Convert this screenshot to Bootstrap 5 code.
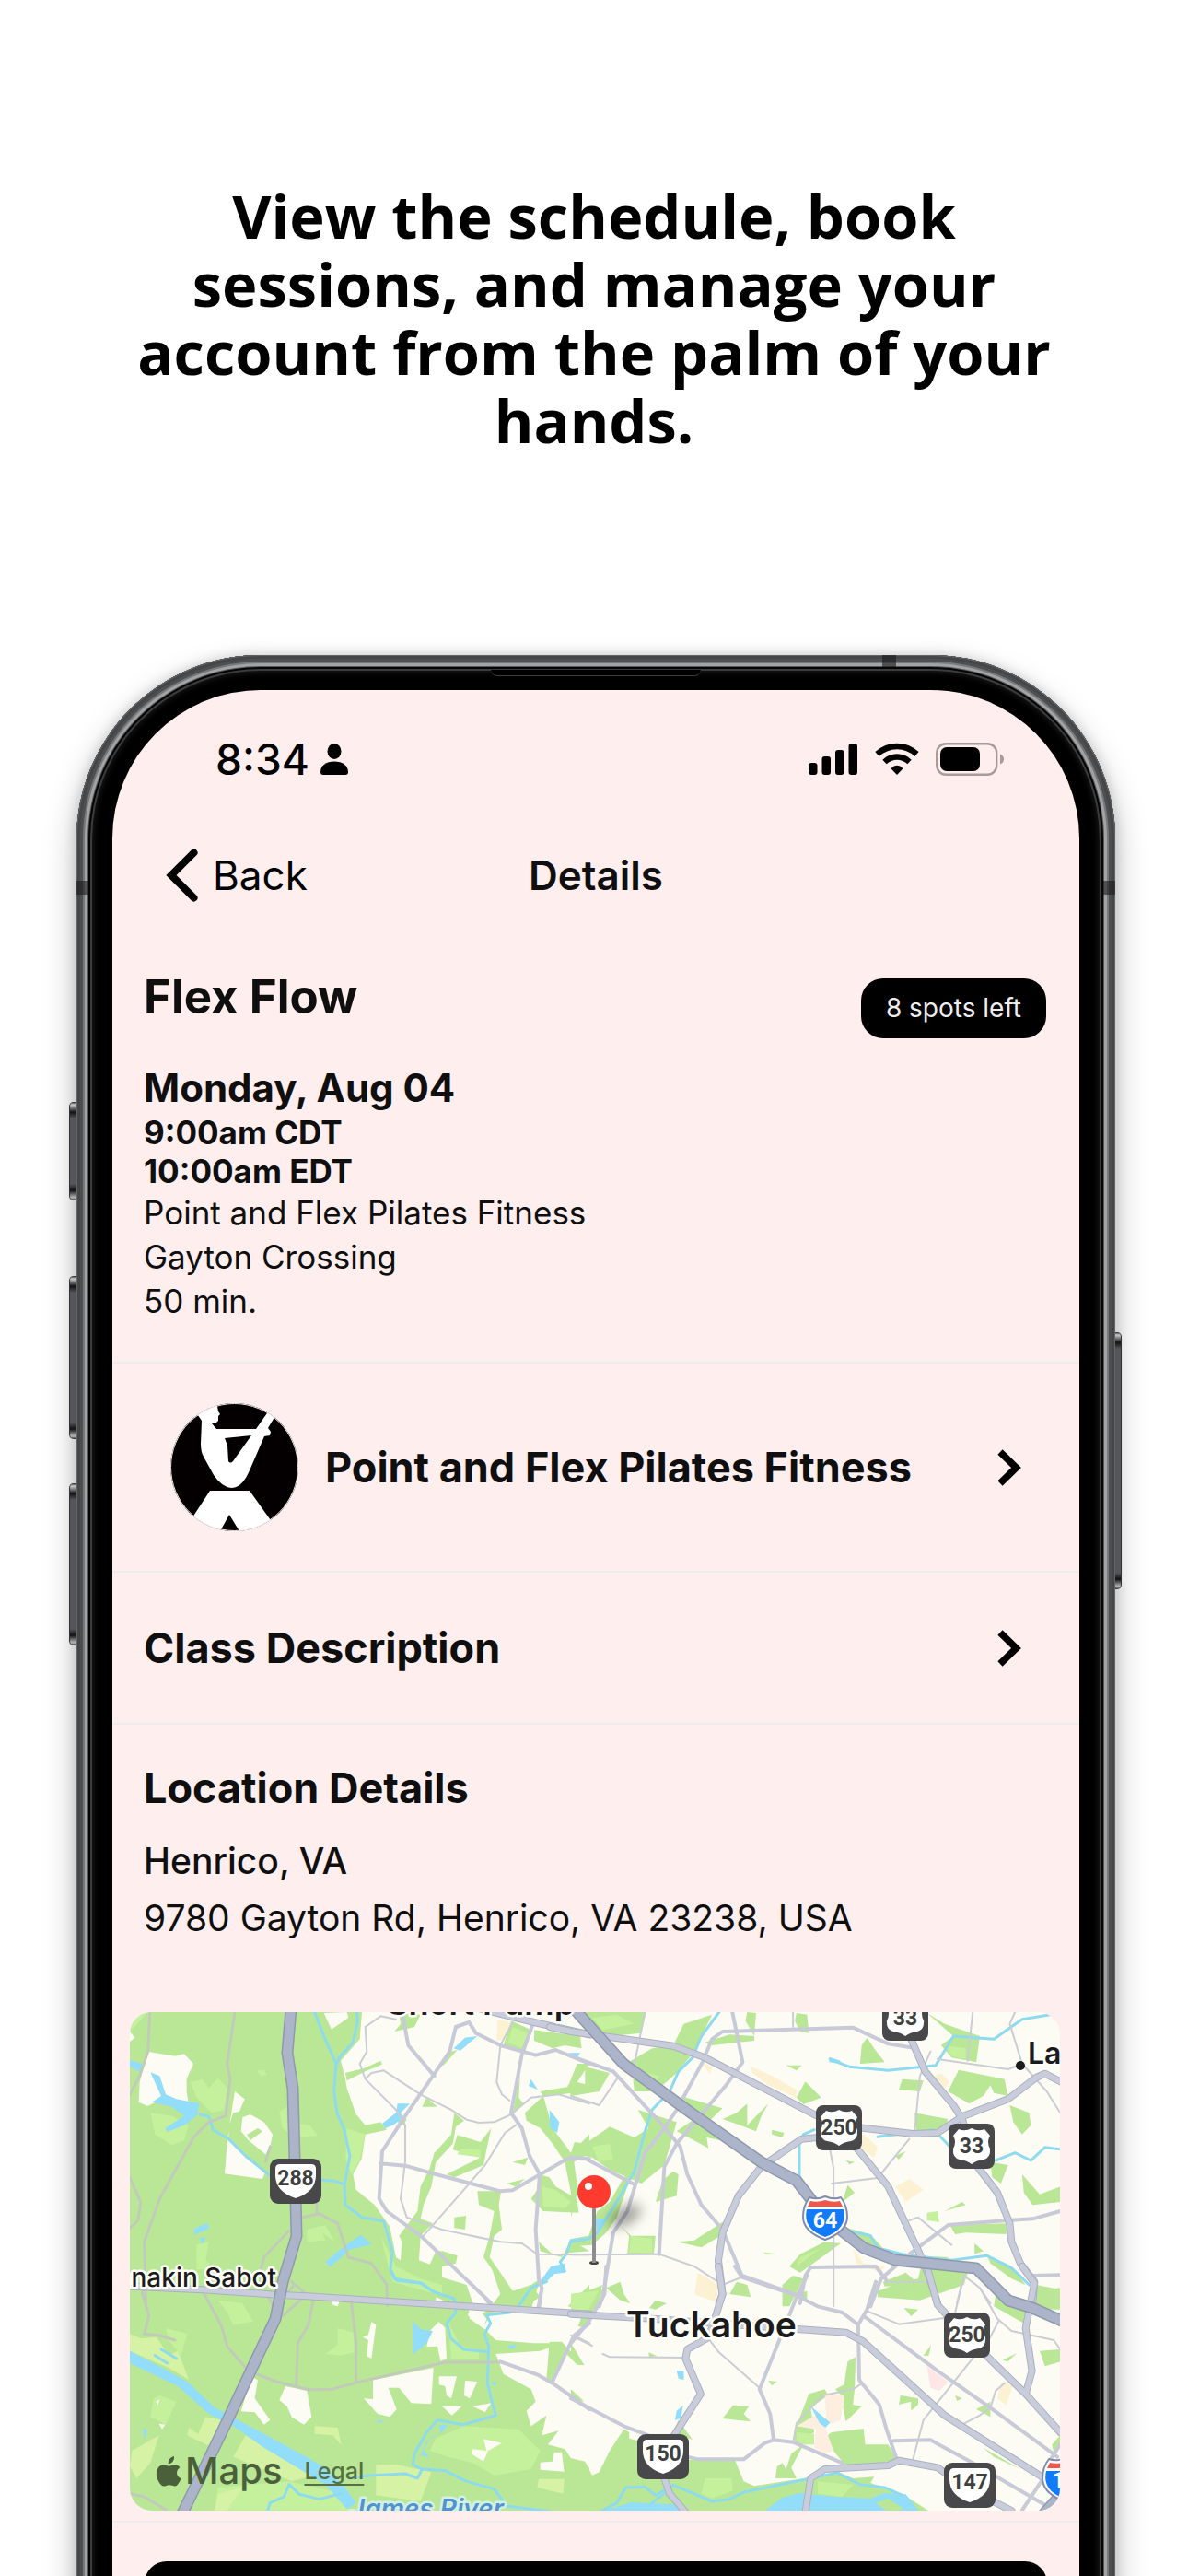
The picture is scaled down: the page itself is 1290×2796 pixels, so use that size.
<!DOCTYPE html>
<html lang="en">
<head>
<meta charset="utf-8">
<meta name="viewport" content="width=device-width, initial-scale=1">
<title>Class details</title>
<link href="https://cdn.jsdelivr.net/npm/bootstrap@5.3.0/dist/css/bootstrap.min.css" rel="stylesheet">
<style>
  body { background: #fff; color: #0f0f0f; font-family: Inter, "Liberation Sans", sans-serif; }
  .headline { font: 700 65px/74px "Open Sans", "Noto Sans", sans-serif; color: #000; padding: 197px 140px 218px; }
  .device-wrap { padding: 0 79px 0 83px; }
  .device {
    padding: 38px 39px 0; margin-bottom: -80px; border-radius: 200px 200px 0 0; background: #000;
    box-shadow: 0 16px 36px rgba(0,0,0,.26), 0 0 14px rgba(0,0,0,.16);
  }
  .device-rim {
    inset: 0; border-radius: inherit; pointer-events: none;
    box-shadow: inset 0 0 0 1px #636466, inset 0 0 0 4px #454648, inset 0 0 0 7px #4e4f51, inset 0 0 0 9px #77787a,
      inset 0 0 0 12px #a2a3a4, inset 0 0 0 13px #555658, inset 0 0 0 15px #050505, inset 0 0 0 17px #3c3c3d, inset 0 0 7px 18px #1d1d1e;
  }
  .speaker { top: 16px; left: 50%; width: 228px; height: 7px; margin-left: -114px; background: #000; border-bottom: 1px solid #3c3c3d; border-radius: 0 0 8px 8px; }
  .antenna { background: rgba(25,25,27,.6); }
  .antenna-top { top: 0; right: 238px; width: 15px; height: 13px; }
  .antenna-left { left: 0; top: 245px; width: 13px; height: 15px; }
  .antenna-right { right: 0; top: 245px; width: 13px; height: 15px; }
  .side-key { width: 9px; background: linear-gradient(#222, #ccc 3px, #111 11px, #55565a 18px, #55565a calc(100% - 18px), #111 calc(100% - 11px), #bbb calc(100% - 3px), #222); border-left: 1px solid #333; border-radius: 5px 0 0 5px; left: -8px; }
  .key-action { top: 485px; height: 107px; }
  .key-up { top: 674px; height: 177px; }
  .key-down { top: 899px; height: 176px; }
  .key-power { left: auto; right: -7px; top: 735px; height: 279px; border-radius: 0 5px 5px 0; border-left: 0; border-right: 1px solid #333; }
  .display-area { background: #ffeeee; border-radius: 161px 161px 0 0; }

  .status { padding: 50px 82px 0 112px; height: 100px; font-size: 46px; line-height: 50px; font-weight: 500; color: #000; }
  .topbar { padding: 0 58px; margin-top: 72px; height: 56px; font-size: 44px; line-height: 56px; }
  .back-btn { border: 0; background: none; color: #000; gap: 16px; }
  .title-lg { font-size: 51px; line-height: 60px; font-weight: 700; }
  .title-md { font-size: 45px; line-height: 56px; font-weight: 700; }
  .block { padding: 0 36px 0 34px; border-bottom: 2px solid #efecef; }
  .summary { padding-top: 75px; padding-bottom: 42px; }
  .spots { background: #000; color: #eee; font-size: 28px; line-height: 65px; padding: 0 27px; border-radius: 24px; margin-top: 10px; font-weight: 400; }
  .day { font-size: 42px; line-height: 50px; font-weight: 700; margin: 29px 0 2px; }
  .hour { font-size: 35px; line-height: 42px; font-weight: 700; }
  .info { font-size: 35px; line-height: 48px; }
  .link-row { color: inherit; text-decoration: none; padding-right: 62px; }
  .studio { padding-left: 63px; padding-top: 43px; padding-bottom: 43px; gap: 29px; }
  .desc { height: 165px; }
  .place { padding: 41px 34px 71px; }
  .address { font-size: 39px; line-height: 62px; }
  .map-block { padding: 0 21px 11px 19px; }
  .map-box { border-radius: 24px; }
  .map-credit { left: 28px; bottom: 19px; gap: 24px; color: #49603b; }
  .map-credit span { font-size: 40px; line-height: 48px; font-weight: 500; }
  .map-credit a { font-size: 25px; line-height: 28px; font-weight: 500; color: #567044; text-underline-offset: 5px; }
  .action { margin: 42px 35px 0; height: 150px; border-radius: 24px; background: #000; border: 0; }

  .map-svg path, .map-svg line { vector-effect: non-scaling-stroke; stroke-linejoin: round; stroke-linecap: round; }
  .wood { fill: #b9e796; }
  .field { fill: #c5f09c; }
  .crop-land { fill: #d6f2a4; }
  .town { fill: #fcfbf4; }
  .shop { fill: #fdf1d3; }
  .pond { fill: #92ddfa; }
  .stream { fill: none; stroke: #8fdbee; stroke-width: 3; }
  .lane { fill: none; stroke: #cbcdd5; stroke-width: 2; }
  .rural { fill: none; stroke: #c2cbb9; stroke-width: 3; }
  .street { fill: none; stroke: #c8cbd7; stroke-width: 4; }
  .main-edge { fill: none; stroke: #abb0c0; stroke-width: 8; }
  .main-fill { fill: none; stroke: #c9cddb; stroke-width: 6; }
  .fwy-edge { fill: none; stroke: #8f98ad; stroke-width: 13; }
  .fwy-fill { fill: none; stroke: #acb4c9; stroke-width: 10; }
  .map-name { font-family: Inter, sans-serif; font-weight: 600; fill: #1b1b1d; stroke: #fffef8; stroke-width: 5; paint-order: stroke; stroke-linejoin: round; }
  .shield-no { font-family: "Liberation Sans Narrow", Roboto, sans-serif; font-weight: 700; font-size: 23px; fill: #3f3f40; text-anchor: middle; }
</style>
<script src="https://cdn.jsdelivr.net/npm/bootstrap@5.3.0/dist/js/bootstrap.bundle.min.js"></script>
</head>
<body>
<main class="vh-100 overflow-hidden d-flex flex-column">
  <h1 class="headline text-center mb-0">View the schedule, book sessions, and manage your account from the palm of your hands.</h1>

  <div class="device-wrap flex-grow-1 d-flex flex-column">
    <div class="device position-relative flex-grow-1">
      <i class="side-key key-action position-absolute"></i>
      <i class="side-key key-up position-absolute"></i>
      <i class="side-key key-down position-absolute"></i>
      <i class="side-key key-power position-absolute"></i>
      <div class="device-rim position-absolute"></div>
      <i class="speaker position-absolute"></i>
      <i class="antenna antenna-top position-absolute"></i>
      <i class="antenna antenna-left position-absolute"></i>
      <i class="antenna antenna-right position-absolute"></i>

      <div class="display-area position-relative overflow-hidden h-100">
        <div class="status d-flex align-items-center justify-content-between">
          <div class="d-flex align-items-center gap-2">
            <span>8:34</span>
            <svg width="36" height="34" viewBox="0 0 36 34"><ellipse cx="19" cy="8.500" rx="7.500" ry="8.500"/><path d="M4 31C4 24 10 19.500 19 19.500S34 24 34 31Q34 34 31 34H7Q4 34 4 31Z"/></svg>
          </div>
          <div class="d-flex align-items-center">
            <svg class="me-3" width="56" height="36" viewBox="0 0 56 36"><rect x="0" y="22" width="9.500" height="13" rx="3"/><rect x="14.500" y="15" width="9.500" height="20" rx="3"/><rect x="29" y="8" width="9.500" height="27" rx="3"/><rect x="43.500" y="1" width="9.500" height="34" rx="3"/></svg>
            <svg class="me-3" width="50" height="36" viewBox="0 0 50 36" fill="none" stroke="#000" stroke-width="6.400"><path d="M2.500 12.500Q12 4 24 4T45.500 12.500"/><path d="M10.500 21Q16.500 15.500 24 15.500T37.500 21"/><path d="M24 35L17.500 28.200Q20.500 24.800 24 24.800T30.500 28.200Z" fill="#000" stroke="none"/></svg>
            <svg width="74" height="36" viewBox="0 0 74 36"><rect x="1.200" y="1.200" width="65" height="33.600" rx="10" fill="none" stroke="#a79b9c" stroke-width="2.400"/><rect x="5" y="5" width="43" height="26" rx="7"/><path d="M70 12.500Q74 14 74 18T70 23.500Z" fill="#a79b9c"/></svg>
          </div>
        </div>

        <nav class="topbar row g-0 align-items-center">
          <div class="col-4"><button type="button" class="back-btn d-flex align-items-center p-0"><svg width="35" height="58" viewBox="0 0 35 58" fill="none" stroke="#000" stroke-width="8" stroke-linecap="round" stroke-linejoin="miter"><path d="M30.500 4.500L6 29L30.500 53.500"/></svg>Back</button></div>
          <div class="col-4 text-center fw-semibold">Details</div>
        </nav>

        <section class="block summary">
          <div class="d-flex justify-content-between align-items-start">
            <h2 class="title-lg mb-0">Flex Flow</h2>
            <span class="spots">8 spots left</span>
          </div>
          <h3 class="day">Monday, Aug 04</h3>
          <div class="hour">9:00am CDT</div>
          <div class="hour">10:00am EDT</div>
          <div class="info">Point and Flex Pilates Fitness</div>
          <div class="info">Gayton Crossing</div>
          <div class="info">50 min.</div>
        </section>

        <a href="#studio" class="block link-row studio d-flex align-items-center">
          <svg class="flex-shrink-0" width="139" height="139" viewBox="0 0 139 139">
            <defs><clipPath id="logo"><circle cx="69.500" cy="69.500" r="69.500"/></clipPath></defs>
            <g clip-path="url(#logo)">
              <rect width="139" height="139" fill="#040001"/>
              <path d="M24 0H50L51 3L52 9L54 12L52 14V19L50 21L45 22L50 28H93L107 8L115 12L106 27L109 31L108 35L102 36L86 73Q78 92 66 92Q56 91 47 78L36 58Q33 53 33 44L34 19L27 9ZM59 38L88 35L68 63Q65 66 63 63L62 46Z" fill="#fff" fill-rule="evenodd"/>
              <path d="M43 95H86L111 130L100 139H75L64 121L54 139H30L22 127Z" fill="#fff"/>
            </g>
            <circle cx="69.500" cy="69.500" r="69" fill="none" stroke="#f2eff0" stroke-width="1"/>
          </svg>
          <span class="title-md flex-grow-1">Point and Flex Pilates Fitness</span>
          <svg width="27" height="40" viewBox="0 0 27 40" fill="none" stroke="#000" stroke-width="7.500"><path d="M3 3L20.500 20L3 37"/></svg>
        </a>

        <a href="#description" class="block link-row desc d-flex align-items-center">
          <span class="title-md flex-grow-1">Class Description</span>
          <svg width="27" height="40" viewBox="0 0 27 40" fill="none" stroke="#000" stroke-width="7.500"><path d="M3 3L20.500 20L3 37"/></svg>
        </a>

        <section class="place">
          <h2 class="title-md mb-0">Location Details</h2>
          <div class="address fw-medium pt-3 mt-1">Henrico, VA</div>
          <div class="address">9780 Gayton Rd, Henrico, VA 23238, USA</div>
        </section>

        <div class="block map-block">
          <div class="map-box position-relative overflow-hidden">
            <svg class="map-svg d-block w-100 h-auto" viewBox="0 0 1010 541" role="img" aria-label="Map around Tuckahoe">
              <defs>
                <filter id="soft" x="-80%" y="-80%" width="260%" height="260%"><feGaussianBlur stdDeviation="7"/></filter>
                <g id="state"><rect width="56" height="49" rx="9" fill="#48484a"/><path d="M6 11Q6 6 11 6H45Q50 6 50 11V18Q50 36 28 43Q6 36 6 18Z" fill="#fff"/></g>
                <g id="federal"><rect width="50" height="49" rx="8" fill="#48484a"/><path d="M11 6Q18 9 25 5Q32 9 39 6L45 13Q41 20 45 27Q46 37 38 39Q30 40 25 44Q20 40 12 39Q4 37 5 27Q9 20 5 13Z" fill="#fff"/></g>
                <g id="interstate"><path d="M8 1Q16 4 25 0Q34 4 42 1Q49 10 49 22Q49 38 25 47Q1 38 1 22Q1 10 8 1Z" fill="#fff" stroke="#7e8baa" stroke-width="2"/><path d="M9 5Q17 7 25 4Q33 7 41 5L44 11H6Z" fill="#f1564c"/><path d="M5 14H45Q50 35 25 44Q0 35 5 14Z" fill="#127bfb"/></g>
              </defs>
              <rect width="1010" height="541" class="town"/>

              <!-- north-west ground -->
              <g transform="translate(-21 -24) scale(.33333)">
                <path class="wood" d="M63 60H820L812 160L750 230L765 290L770 320L800 405L830 440L880 430L900 455L830 470L818 550L790 600L800 650L860 700L910 770L930 870L945 880L950 810L1000 740L1050 760L1010 800L1005 880L1040 893L1060 850H1080L1130 870L1080 900V935L1160 960L1180 1020V1050H63Z"/>
                <path class="field" d="M130 400L200 410L255 440L240 490L200 505L145 470ZM260 300L300 290L320 320L350 285L380 320L370 390L330 400L280 350ZM550 395L575 380V430L650 440L675 475L600 480L560 450ZM770 450L830 470L810 560L785 600L765 550ZM880 800L930 900L1010 940L1080 960L1160 1000L1040 985L920 950L900 880ZM640 780L700 765L730 820L690 790L700 815L640 820ZM280 830L320 820L310 880L340 910H280ZM63 72H120L70 130ZM475 262L500 262L510 275L490 280Z"/>
                <path class="town" d="M120 200L210 215L240 208L270 240L248 290V330L255 375L180 350L120 378L92 365L95 300ZM405 330L437 355L420 395L400 400L388 435L400 360ZM455 405L500 430L528 470L520 510L505 535L450 490L425 460L430 415ZM385 460V490L440 540L505 590L495 615L372 598L380 500ZM695 75L770 72L775 90L720 128ZM63 135L80 155L63 167Z"/>
                <path class="wood" d="M445 470L480 450L495 460L455 490ZM940 75L1010 80L990 120L925 135L945 110ZM765 270L825 255L880 230L885 242L830 265L770 295ZM1120 400L1152 425L1125 445L1115 500L1060 560L1045 640L1020 700L1000 790L960 840L940 800L1000 720L1010 640L1040 580L1055 530L1110 470ZM1130 472L1205 495L1240 450L1225 520L1215 570L1120 610L1095 600L1205 545L1115 520ZM1195 655L1272 655L1265 700L1275 780L1250 800L1235 870L1270 920L1310 980L1370 960L1400 940L1370 1040H1310L1250 920L1215 870L1235 800L1250 720L1200 700ZM1305 100L1370 130L1350 200L1280 180ZM1335 270L1330 350L1345 370L1310 405ZM1350 400L1410 345L1440 450L1500 530L1560 470V530L1510 560L1525 670L1500 660L1480 560L1440 500L1400 450L1355 425ZM1400 330L1490 315L1520 240L1560 240L1520 300L1560 310V335L1500 335L1410 348ZM1395 600L1430 610L1450 640L1520 680L1525 725L1410 720L1370 680L1390 650ZM1120 740L1158 735L1155 780L1120 775ZM1015 380L1030 350L1065 380ZM1380 130L1530 150L1535 190L1480 180L1440 190L1380 165ZM1080 850L1130 865L1125 890L1080 900ZM1290 630L1350 615L1320 640ZM1310 560L1360 545L1350 570ZM1395 820L1440 860L1560 850L1500 815L1470 870L1400 850ZM930 400L965 420L955 440L935 430ZM1070 255L1110 200L1130 195L1090 240Z"/>
                <path class="field" d="M1140 515L1205 520V545L1130 535ZM1405 640L1450 650L1500 690L1480 710L1410 705ZM1310 120L1360 140L1340 190L1295 170Z"/>
                <path class="shop" d="M1260 95L1305 105L1280 160L1258 165Z"/>
                <path class="pond" d="M130 268L160 280L180 340L215 355L290 370L280 410L240 440L185 462L178 450L240 410L200 380L135 365L165 345L140 290ZM63 228L102 240L98 268L63 250ZM272 778L315 758L322 775L275 797ZM290 808L310 805L300 828ZM700 885L760 835L815 798L852 828L780 845L715 902ZM885 435L930 400L935 370L975 370L945 400L955 415L920 440L895 450ZM1118 190L1155 155L1195 150L1160 180L1140 197ZM1430 390L1462 430L1455 465L1432 450ZM1370 290L1392 325L1362 312ZM1490 205H1530L1520 220ZM1400 948L1435 900L1480 890V920L1445 925L1420 950Z"/>
                <path class="stream" d="M660 60L695 150L735 240L728 330L738 400L760 450L780 540L762 632L765 700L820 740L890 752L918 850L912 910L930 945L1010 955L1050 980L1120 1012M800 60L805 100L790 170L745 220L733 250M290 405L320 412L335 455L385 485L440 540L520 605M685 618L730 622L760 632M1560 805L1500 815L1485 860L1465 885L1480 915M1410 950L1370 970L1330 1030"/>
              </g>
              <!-- north-east ground -->
              <g transform="translate(479 -24) scale(.3827 .33333)">
                <path class="wood" d="M30 65H215L200 140L110 150L40 110ZM320 110L400 80L350 200L300 270L240 330L180 330L170 230L230 190L290 180ZM310 345L430 385L380 440L425 490L385 480L390 515L300 460L350 420ZM190 390L300 430L265 570L200 630L110 585L60 545L0 530L10 495L40 500L110 445L180 480L220 450ZM40 250L110 270L80 330L0 345L-10 310L40 320ZM290 590L305 600L300 670L240 690L260 620ZM640 75L670 80L675 140L650 135L635 100ZM500 72L525 75L520 150L495 100ZM840 155L860 190L890 235L820 240L825 180ZM1010 75L1060 110L1160 150L1150 235L1080 220L1050 180L1085 150ZM1100 260L1230 290L1240 345L1200 335L1190 310L1170 345L1130 370L1070 330ZM1245 375L1300 400L1305 440L1280 470L1255 430ZM1190 560L1240 570L1220 630L1195 610ZM1280 600L1330 665L1388 640V690L1310 700L1285 660ZM1075 765L1240 760L1235 795L1120 790L1090 795ZM140 765L170 800L240 800L235 860H160L165 800ZM180 590L160 640L130 740L100 790L60 830L0 835V815L50 800L75 720L110 690L150 610ZM300 820L350 815L430 755L440 790L370 838ZM430 420L470 400L500 370L500 440L560 370L540 410L525 460L480 440ZM640 350L665 298L710 350L660 372ZM620 900L650 860L720 820L765 825L700 880L650 920ZM1000 870L1130 905L1115 960L990 1010L870 1000L870 980L940 950L985 940ZM785 635L805 660L770 690ZM770 770L850 795L900 860L1070 870L1050 900L930 890L840 850ZM0 560L20 650L0 740ZM570 455L605 465L600 480L570 470ZM610 245H655L640 262ZM545 855L580 858L555 862ZM470 950L500 960L510 1000L450 990ZM600 960L630 930L660 940L620 1030H600ZM25 990L90 960L70 1020H0ZM940 290L1000 295L990 330L930 325ZM975 400L1070 420L1060 450L980 460ZM780 555L805 560L790 568ZM1320 960L1388 975V1040H1310ZM1180 860L1250 900L1290 960L1250 940L1190 890ZM1060 720L1110 690L1120 700ZM1145 825L1170 850L1145 860ZM520 150L450 145L380 170L400 180L520 165ZM920 540L950 525L930 552Z"/>
                <path class="field" d="M60 90L130 80L180 110L90 130ZM185 260L250 280L240 320L190 300ZM60 510L110 500L120 550L80 560ZM170 800L230 810V855H165ZM1060 180L1120 190V225L1080 215ZM650 870L710 840L640 900ZM1010 725L1040 720L1045 755L1010 750Z"/>
                <path class="shop" d="M510 248L570 280L640 325L640 350L560 310L515 270ZM830 470L870 510L860 545L800 500ZM960 615L1000 650L950 690L935 665L920 640ZM360 920L420 960L410 1015L350 990ZM800 840L830 890L890 900L880 920L810 890ZM1050 270L1075 300L1060 320L1030 280ZM370 235L400 250L395 275Z"/>
                <path class="pond" d="M733 218L765 230L760 240L733 235ZM70 745L100 745L75 800Z"/>
                <path class="stream" d="M425 65L370 150L345 220L305 265L280 330L230 390L210 460L180 590L140 670L75 790L50 810L0 820M735 225L790 250L900 262L1035 245L1085 150L1200 160L1280 95L1360 80M690 455L660 470L648 500V620M870 478L1030 455L1075 510M1205 555L1260 530L1305 555L1345 512L1388 518M770 780L850 800L870 840L940 860L1080 880L1180 865L1250 905L1300 960M1320 990L1350 1005L1388 985"/>
              </g>
              <!-- south-west ground -->
              <g transform="translate(-21 276) scale(.33333)">
                <path class="wood" d="M63 90H1080V40L1165 90V160L1215 200L1255 240L1380 250L1470 250L1400 275L1255 285L1280 350L1370 400L1385 440L1355 470L1370 520L1420 485L1405 550L1460 535L1425 580L1480 595L1500 625L1560 655V800H63ZM1240 0L1290 60L1320 90L1370 60L1400 100L1330 140L1240 150L1220 190L1205 160L1240 130L1270 90ZM1490 130L1560 60V145ZM1430 245L1470 245L1540 320L1520 320L1480 280L1440 380L1420 370Z"/>
                <path class="field" d="M140 430L160 420L215 440L180 515L130 490ZM350 110L430 120L465 180L400 190L380 150ZM1060 560L1150 520L1330 530L1400 600L1370 660L1250 680L1180 640L1100 620L1040 600ZM350 720L580 700L760 740L780 794H340ZM740 200L790 215L795 280L750 290L700 285L740 255ZM180 200L250 220L230 290L190 240ZM1100 180L1140 260L1200 270V300L1110 300Z"/>
                <path class="crop-land" d="M63 220L100 235L150 230L190 290L220 275L255 368L190 330L63 275ZM310 490L365 500L335 590L270 560L250 550L255 525L285 545ZM440 550L600 630L660 680L590 700L400 620ZM158 550L130 640L85 690L63 650L70 600ZM865 645H930L1045 670L1010 765L865 745ZM665 520L740 525L752 582L725 550L665 545ZM1395 692H1478L1475 740L1390 720ZM350 740L430 720L380 794H340Z"/>
                <path class="town" d="M460 360L480 370L470 430L520 500L500 515L470 475L425 472ZM570 390L640 405L655 490L630 515L590 490L575 455L550 435ZM855 370L1052 330L1045 448L980 445L940 395H905L932 465L910 490L870 480L825 430L855 432ZM850 180L865 190L850 300L835 292L840 240L822 230L840 222ZM1070 180L1090 200L1095 300L1075 308L1065 260L1030 262L1040 210ZM1070 358H1128L1110 430L1095 420L1090 390L1070 385ZM1155 372L1195 375L1170 430L1152 420ZM1080 455H1145L1112 485ZM1180 455L1240 445L1220 475ZM1215 562L1275 575L1230 600L1215 635L1175 610L1180 595L1225 600ZM1400 638L1440 635L1445 605L1470 605L1478 668L1400 662ZM722 110L747 112L740 130L724 125ZM158 512L178 515L168 530ZM148 440L160 432L155 452ZM1060 100L1085 110L1060 112ZM1165 120L1200 140L1225 170L1215 202L1170 170Z"/>
                <path class="pond" d="M63 275L150 320L250 375L340 460L500 545L700 655L760 715L800 770L770 790L700 710L500 590L400 520L320 480L220 390L63 315ZM985 178L1010 205L1050 210L1030 250L985 287ZM105 525L120 535L110 565ZM1070 515H1098L1085 535L1030 570L1010 615L1040 622L1020 600L1040 560L1075 540ZM1290 260L1325 252L1310 270ZM1240 378L1258 375L1252 390ZM870 500L895 505L870 510Z"/>
                <path class="stream" d="M915 20L925 40L1015 55L1050 82L1120 105L1125 150L1095 185L1110 235L1150 270L1230 278M1420 50L1370 70L1325 135L1300 150L1225 158L1238 185L1218 220L1232 260L1228 380L1240 430L1255 485L1150 515L1065 500L1030 540L990 610L985 645L1015 660L1090 665L1160 700L1250 725L1290 780L1450 800M780 690L850 680L960 675L1000 690L1015 660M510 800L520 770L565 750L582 710L615 742L680 758L750 740M165 270L215 300M145 290L185 315"/>
              </g>
              <!-- south-east ground -->
              <g transform="translate(479 276) scale(.3827 .33333)">
                <path class="wood" d="M0 625L40 635L60 680L80 670L110 600L150 530L165 540L165 560L200 570V690L330 630H465L490 700L520 715L660 690L760 670L800 690L860 685L850 705L940 740L1020 800H0ZM720 555L740 540L830 528L835 580L900 580L925 630L850 645L780 650L745 600ZM675 415L720 400L730 420L680 460L690 540L640 580L632 560L640 520ZM785 310L808 295L805 400L800 450L825 455L780 505L772 460L775 430L750 400L775 385ZM430 495L460 452L505 455L490 480L510 505L470 500ZM0 90L90 75L75 130L40 200L20 195L35 150L0 145ZM100 70L140 50L150 90L168 120L140 110ZM222 135L240 110L272 120L240 140ZM1205 90L1300 130L1285 185L1200 130ZM1310 80L1388 70V130L1320 120ZM1330 275L1388 270V310L1345 325ZM935 420L985 430L985 450L965 470L965 440L930 450ZM0 250L38 322L15 318L0 290ZM580 690L585 650L600 640L610 660L625 610L660 580L625 655L640 690ZM0 400L38 440L0 430ZM560 372L585 375L570 388ZM945 135L985 140L965 162ZM1000 290L1022 255L1015 290ZM1225 305L1265 282L1240 310ZM1040 340L1130 405L1100 380ZM1170 590L1275 660L1200 620ZM640 90L670 80V110ZM885 50L930 30L950 20L990 60L890 65ZM220 280L245 292L222 295ZM290 540L305 500L345 565ZM1150 465L1190 440V490ZM1090 420L1110 430L1095 438ZM1365 580L1388 550V590L1370 610Z"/>
                <path class="field" d="M0 90L80 78L50 140L0 142ZM380 690L455 690L460 730L400 755L370 740ZM700 700L800 710L770 750L700 740ZM640 540L690 545V580L640 580Z"/>
                <path fill="#fdeee0" d="M720 415L775 420L765 500L720 520L745 600L720 610L690 590L695 530L640 520L700 480L725 510Z"/>
                <path fill="#ffe6e6" d="M1010 325L1070 375L1045 405L1020 395Z"/>
                <path class="shop" d="M1220 378L1255 385L1235 452L1210 430Z"/>
                <path class="pond" d="M680 455L735 508L722 525L705 510ZM300 340H320V370L305 365ZM318 452L312 495L295 500L300 470ZM545 800L600 752L650 738L750 750L850 755L890 738L950 742L990 800ZM80 800L170 768L290 775L325 800Z"/>
                <path class="wood" d="M865 770L900 755L945 790L900 800Z"/>
                <path class="stream" d="M80 800L130 770L155 720L210 718L240 745L290 712L400 765L450 758L490 735L660 695L755 672L820 710L890 720L940 745M230 770L265 740"/>
              </g>

              <!-- north-west roads -->
              <g transform="translate(-21 -24) scale(.33333)">
                <path class="rural" d="M128 72L122 200L95 280L63 340M405 72L380 240L390 290L375 410L320 430L270 480L160 680L110 820L115 1020M63 610L98 690L90 750L63 775M625 740L680 728L740 760L775 870L850 890L900 960L902 1030M580 785L500 870L490 910M520 510L505 560M672 690V728"/>
                <path class="lane" d="M830 290L930 390L960 440V560L945 680L965 740L1080 780L1270 820L1340 825L1390 860L1560 862M830 290L850 270L890 262L1010 340L1110 390L1160 422L1200 432L1250 430L1305 405L1370 350L1460 340L1560 370M1270 180L1258 300L1275 340L1300 360M1320 440L1285 465L1220 570L1160 640L1020 800M930 95L880 85L830 120L835 200L812 240L830 290M1270 180L1310 105"/>
                <path class="street" d="M880 565L960 572L1060 600L1270 655L1310 652L1400 600L1490 548L1560 550M1168 105L1125 120L1105 200L1050 280L960 410L885 525L875 680L900 720L1010 800L1240 1020M950 72L970 180L1055 280M1168 105L1190 140L1270 180L1385 212L1450 195L1560 240M1380 100L1340 210L1305 400L1340 450L1365 540L1398 600L1385 780L1395 940L1405 970L1395 1040"/>
                <path class="main-edge" d="M1200 60L1380 105L1560 145"/><path class="main-fill" d="M1200 60L1380 105L1560 145"/>
              </g>
              <!-- north-east roads -->
              <g transform="translate(479 -24) scale(.3827 .33333)">
                <path class="lane" d="M735 520L745 580V1020M740 630L870 612L960 485M1040 225L1240 258L1280 240L1350 330L1388 400M1140 72L1125 230M1020 200L990 280L975 465M210 72L180 240M630 72V120M960 750L985 740L1080 830M0 345L80 375L130 290M0 862L250 860L350 900L430 960L485 935M1260 72L1245 110L1280 240M895 950H1010M1115 930L1095 1020M1115 930L1160 970L1190 1020"/>
                <path class="street" d="M380 215L400 160L430 135L800 122L900 175L980 190M458 72L487 235L440 310L300 500L265 575L250 860M380 220L300 390L265 450L210 530L160 720L120 790L90 1000L80 1030M0 215L120 265L260 440L310 510L330 600L370 700L430 780L485 930L660 1000M0 545L40 548L175 630M1388 720L1310 745L1240 750L1070 765L960 860L880 940L850 1030M650 1020L665 930L680 903L865 900L895 945M1388 928L1310 930"/>
                <path class="main-edge" d="M-60 120L0 135L290 182L380 220L690 405L760 440L970 468L1040 465L1110 412L1240 355L1320 285L1345 272L1388 298M965 160L1005 265L1085 375L1110 420L1150 570L1210 660L1245 760L1250 820L1275 890L1315 950L1310 1020M800 500L900 640L990 860L1015 930L1040 1020M700 480L655 485L540 575L475 670L430 790L418 880L430 990L420 1020"/>
                <path class="main-fill" d="M-60 120L0 135L290 182L380 220L690 405L760 440L970 468L1040 465L1110 412L1240 355L1320 285L1345 272L1388 298M965 160L1005 265L1085 375L1110 420L1150 570L1210 660L1245 760L1250 820L1275 890L1315 950L1310 1020M800 500L900 640L990 860L1015 930L1040 1020M700 480L655 485L540 575L475 670L430 790L418 880L430 990L420 1020"/>
              </g>
              <!-- south-west roads -->
              <g transform="translate(-21 276) scale(.33333)">
                <path class="rural" d="M103 85L125 160L110 220L160 225L210 240M300 80L360 190L380 260L440 330M475 350L540 375L650 402L720 400L800 378L880 360L1090 312H1270M660 110L645 190L610 250L605 390M785 120L800 250V375M63 740L110 750L180 792M590 50L640 92L560 160M515 100L540 150M600 60L570 90"/>
                <path class="street" d="M1270 310L1390 352L1440 380L1560 465M1225 110L1245 128M1560 185L1510 225L1440 375"/>
                <path class="lane" d="M1510 225L1560 250M1390 135L1405 60"/>
                <path class="main-edge" d="M63 65L300 76L540 92L640 97L1560 155"/><path class="main-fill" d="M63 65L300 76L540 92L640 97L1560 155"/>
              </g>
              <!-- south-east roads -->
              <g transform="translate(479 276) scale(.3827 .33333)">
                <path class="lane" d="M390 235L420 280L535 395M90 285L110 295L325 297M840 145L930 188L1060 168M1115 30L1090 150M1160 70L1210 170L1250 210L1370 240L1388 270M1150 285L1000 500L970 630M1230 380L1205 405L1190 460L1160 485L1110 515M630 575L640 510L715 420L800 400L820 385M745 0V130M0 225L60 258M1215 175L1185 240"/>
                <path class="street" d="M0 430L150 520L220 550M330 620L360 628H490L550 575L575 565L630 572L770 640M465 0L485 35L640 95L700 130L770 150L815 190M670 30L640 100L535 400L565 480L575 565M865 50L840 140L815 190L818 370L875 450L895 530L925 630M835 165L1040 340L1190 460L1380 620M915 568L1020 565L1140 640L1350 780M100 0L95 90L50 180L0 250M1340 690L1280 794M1388 580L1360 630"/>
                <path class="main-edge" d="M0 155L200 168L780 215L830 245L1060 485L1350 695M1010 0L1040 125L1120 225L1290 415L1388 540M1280 0L1315 55L1290 200L1308 340L1290 415M418 0L430 90L400 200L385 235L330 270L325 300L368 415L290 555M665 800L680 690L720 660L900 648L930 632L1040 655L1120 720L1250 795M262 680L280 740L325 800"/>
                <path class="main-fill" d="M0 155L200 168L780 215L830 245L1060 485L1350 695M1010 0L1040 125L1120 225L1290 415L1388 540M1280 0L1315 55L1290 200L1308 340L1290 415M418 0L430 90L400 200L385 235L330 270L325 300L368 415L290 555M665 800L680 690L720 660L900 648L930 632L1040 655L1120 720L1250 795M262 680L280 740L325 800"/>
              </g>
              <!-- freeways -->
              <g>
                <path class="fwy-edge" d="M175 -4L171 44L177 83L179 160L181 243L166 293L158 333L139 373L106 443L79 499L56 546M482 -4L536 56L609 109L686 163L724 183L755 223L797 256L831 269L919 278L954 313L980 321L1014 336M1018 516L992 545"/>
                <path class="fwy-fill" d="M175 -4L171 44L177 83L179 160L181 243L166 293L158 333L139 373L106 443L79 499L56 546M482 -4L536 56L609 109L686 163L724 183L755 223L797 256L831 269L919 278L954 313L980 321L1014 336M1018 516L992 545"/>
              </g>

              <!-- shields -->
              <use href="#state" x="152" y="159"/><text class="shield-no" x="180" y="188">288</text>
              <use href="#state" x="551" y="458"/><text class="shield-no" x="579" y="487">150</text>
              <use href="#state" x="884" y="489"/><text class="shield-no" x="912" y="518">147</text>
              <use href="#federal" x="745" y="101"/><text class="shield-no" x="770" y="133">250</text>
              <use href="#federal" x="889" y="121"/><text class="shield-no" x="914" y="153">33</text>
              <use href="#federal" x="884" y="326"/><text class="shield-no" x="909" y="358">250</text>
              <use href="#federal" x="817" y="-18"/><text class="shield-no" x="842" y="14">33</text>
              <use href="#interstate" x="730" y="200"/><text class="shield-no" x="755" y="234" style="fill:#fff">64</text>
              <use href="#interstate" x="990" y="484"/><text class="shield-no" x="1002" y="516" style="fill:#fff;text-anchor:start">195</text>

              <!-- place names -->
              <text class="map-name" x="279" y="3" font-size="36">Short Pump</text>
              <text class="map-name" x="159" y="298" font-size="28" text-anchor="end" style="font-weight:500">Manakin Sabot</text>
              <text class="map-name" x="539" y="353" font-size="39">Tuckahoe</text>
              <text class="map-name" x="975" y="56" font-size="32">Lakeside</text>
              <circle cx="967" cy="58" r="5" fill="#1b1b1d"/>
              <text class="map-name" x="239" y="549" font-size="28" font-style="italic" style="fill:#4f93cf;stroke:#d4f0e4">James River</text>

              <!-- pin -->
              <ellipse cx="538" cy="221" rx="19" ry="9" transform="rotate(-30 538 221)" fill="#000" opacity=".38" filter="url(#soft)"/>
              <ellipse cx="504" cy="272" rx="5" ry="2" fill="#444"/>
              <rect x="502" y="210" width="4" height="62" fill="#8c8d90"/>
              <circle cx="504" cy="195" r="18" fill="#ff3b30"/>
              <circle cx="498" cy="189" r="4" fill="#fff"/>
            </svg>
            <div class="map-credit position-absolute d-flex align-items-center">
              <div class="d-flex align-items-center">
                <svg class="me-1" width="28" height="33" viewBox="0 0 28 33" fill="#49603b"><path d="M20 0Q20.500 3.500 18.500 6Q16.500 8.300 13.700 8.300Q13.300 5 15.300 2.700Q17.200.6 20 0Z"/><path d="M26.500 12.200Q23 14.500 23 18Q23 22.300 27.500 24.200Q26.500 27.500 24.500 30Q22.800 32.500 20.800 32.500Q19.500 32.500 18 31.800Q16.300 31.200 14.700 31.200T11.500 31.900Q10 32.600 8.800 32.600Q6.500 32.600 3.800 28.500Q.8 24 .8 19Q.8 14.500 3.200 11.800Q5.300 9.400 8.500 9.400Q10 9.400 11.800 10.100Q13.500 10.800 14.500 10.800Q15.500 10.800 17.300 10Q19.300 9.200 21 9.300Q24.700 9.500 26.500 12.200Z"/></svg>
                <span>Maps</span>
              </div>
              <a href="#legal">Legal</a>
            </div>
          </div>
        </div>

        <div class="d-grid"><button type="button" class="action" aria-label="Book session"></button></div>
      </div>
    </div>
  </div>
</main>
</body>
</html>
